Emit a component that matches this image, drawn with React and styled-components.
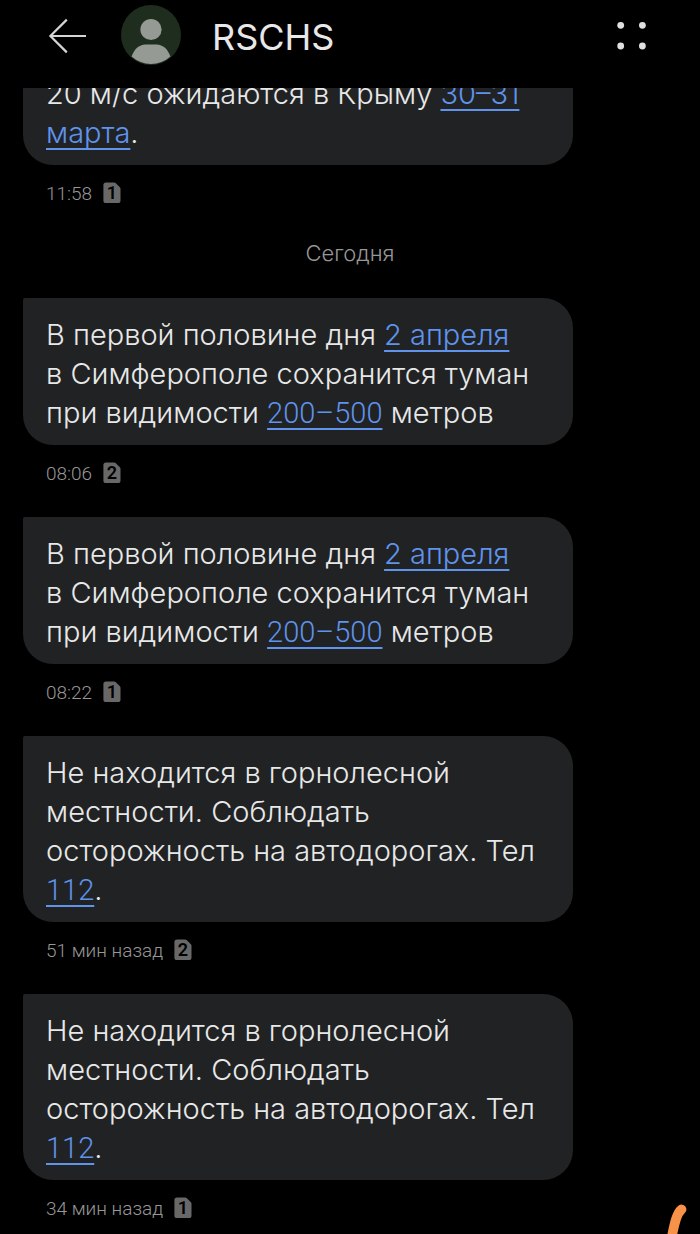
import React from 'react';
import styled, { createGlobalStyle } from 'styled-components';

const GlobalStyle = createGlobalStyle`
    body {
        margin: 0;
        background: #000;
        color: #e8e8e8;
        font-family: Inter, "Noto Sans", sans-serif;
        font-weight: 300;
    }
`

const Screen = styled.div`
    display: flex;
    flex-direction: column;
    height: 100vh;
    overflow: hidden;
`

const Header = styled.header`
    display: flex;
    align-items: center;
    flex-shrink: 0;
    height: 72px;
    padding: 0 48px 16px;
`

const IconButton = styled.button`
    display: flex;
    padding: 0;
    border: 0;
    background: none;
    color: inherit;
    cursor: pointer;
`

const Avatar = styled.svg`
    margin: 0 30px 0 32px;
`

const Title = styled.h1`
    flex: 1;
    margin: 0;
    padding-top: 2px;
    font-size: 36px;
    font-weight: 400;
    line-height: 48px;
`

const Thread = styled.main`
    display: flex;
    flex-direction: column;
    justify-content: flex-end;
    flex: 1;
    min-height: 0;
    padding: 0 23px;
    overflow: hidden;
`

const Message = styled.article`
    flex-shrink: 0;
    max-width: 550px;
    margin-top: 18px;
`

const Bubble = styled.p`
    margin: 0;
    padding: 17px 23px 13px;
    border-radius: 2px 30px 30px 30px;
    background: #212224;
    font-size: 29px;
    line-height: 39px;
`

const TextLink = styled.a`
    color: #5f93ec;
    font-family: ${p => p.$numeric ? 'Roboto, sans-serif' : 'inherit'};
    line-height: 1;
    text-decoration: underline;
    text-decoration-thickness: 2px;
    text-underline-offset: 5px;
    text-decoration-skip-ink: none;
`

const Meta = styled.div`
    display: flex;
    align-items: center;
    gap: 11px;
    height: 52px;
    padding: 2px 23px 0;
    color: #979797;
    font-family: Roboto, sans-serif;
    font-size: 19px;
`

const DateLabel = styled.h2`
    flex-shrink: 0;
    margin: 18px 0 11px;
    color: #979797;
    font-size: 22px;
    font-weight: 300;
    line-height: 32px;
    text-align: center;
`

const Stroke = styled.svg`
    position: fixed;
    right: 0;
    bottom: 0;
`

const SimBadge = ({ slot }) => (
    <svg width="18" height="22" viewBox="0 0 18 22" role="img" aria-label={"SIM " + slot}>
        <path d="M3 0.5H11.2a2 2 0 0 1 1.4 0.6L16.9 5.2a2 2 0 0 1 0.6 1.4V18.5a2.6 2.6 0 0 1-2.6 2.6H3A2.6 2.6 0 0 1 0.4 18.5V3.1A2.6 2.6 0 0 1 3 0.5z" fill="#686868" />
        <text x="9" y="17" textAnchor="middle" fontSize="18" fontWeight="600" fill="#000">{slot}</text>
    </svg>
)

const SmsMessage = ({ time, slot, children }) => (
    <Message>
        <Bubble>{children}</Bubble>
        <Meta>
            <span>{time}</span>
            <SimBadge slot={slot} />
        </Meta>
    </Message>
)

const FogText = () => (
    <>
        В первой половине дня <TextLink href="#date">2 апреля</TextLink>
        {' в\u00a0Симферополе сохранится туман при видимости '}
        <TextLink href="#range" $numeric>200–500</TextLink> метров
    </>
)

const ForestText = () => (
    <>
        Не находится в горнолесной местности. Соблюдать осторожность на
        автодорогах. Тел <TextLink href="tel:112" $numeric>112</TextLink>.
    </>
)

const App = () => {
    return (
        <Screen>
            <GlobalStyle />
            <Header>
                <IconButton aria-label="Назад">
                    <svg width="40" height="40" viewBox="0 0 40 40" fill="none" stroke="#d4d4d4" strokeWidth="2.2">
                        <path d="M38 20H2.6" />
                        <path d="M18.8 3.6L2.4 20l16.4 16.4" />
                    </svg>
                </IconButton>
                <Avatar width="62" height="62" viewBox="0 0 62 62" aria-hidden="true">
                    <circle cx="31" cy="30" r="30" fill="#1f2d1e" />
                    <circle cx="31" cy="24.5" r="10.6" fill="#959b94" />
                    <path d="M11.6 51.6C14 44.5 19 39.6 25.5 39.6h11C43 39.6 48 44.5 50.4 51.6A29 29 0 0 1 11.6 51.6z" fill="#959b94" />
                </Avatar>
                <Title>RSCHS</Title>
                <IconButton aria-label="Меню">
                    <svg width="40" height="40" viewBox="0 0 40 40" fill="#e0e0e0">
                        <circle cx="8.7" cy="9.3" r="3.4" />
                        <circle cx="30.4" cy="9.3" r="3.4" />
                        <circle cx="8.7" cy="30" r="3.4" />
                        <circle cx="30.4" cy="30" r="3.4" />
                    </svg>
                </IconButton>
            </Header>
            <Thread>
                <SmsMessage time="11:58" slot="1">
                    20 м/с ожидаются в Крыму <TextLink href="#date">30–31 марта</TextLink>.
                </SmsMessage>
                <DateLabel>Сегодня</DateLabel>
                <SmsMessage time="08:06" slot="2"><FogText /></SmsMessage>
                <SmsMessage time="08:22" slot="1"><FogText /></SmsMessage>
                <SmsMessage time="51 мин назад" slot="2"><ForestText /></SmsMessage>
                <SmsMessage time="34 мин назад" slot="1"><ForestText /></SmsMessage>
            </Thread>
            <Stroke width="36" height="32" viewBox="0 0 36 32" fill="none" aria-hidden="true">
                <path d="M17.6 7.4C13 11 10.6 20 8 34" stroke="#f79248" strokeWidth="9.6" strokeLinecap="round" />
            </Stroke>
        </Screen>
    )
}

export default App;
